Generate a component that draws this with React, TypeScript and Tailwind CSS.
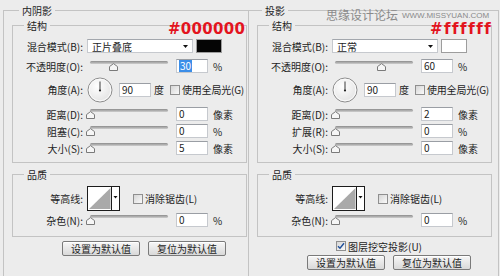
import React from 'react';

const LINE = 'border-[#c3c3c3]';

function Legend({ children, className = '' }: { children: React.ReactNode; className?: string }) {
    return <legend className={`px-[3px] h-[13px] leading-[13px] ${className}`}>{children}</legend>;
}

function Label({ children }: { children: React.ReactNode }) {
    return <div className="w-[70px] shrink-0 text-right whitespace-nowrap">{children}</div>;
}

function NumBox({ value, selected }: { value: string; selected?: boolean }) {
    return (
        <div className="w-[32px] h-[14px] shrink-0 bg-white border border-[#c6c9ce] border-t-[#9a9ea4] pl-[2px] flex items-center leading-none">
            {selected ? <span className="bg-[#3b8ee8] text-white px-[1px] py-[1px]">{value}</span> : <span>{value}</span>}
        </div>
    );
}

function Slider({ pct }: { pct: number }) {
    return (
        <div className="relative w-[84px] h-[14px] shrink-0">
            <div className="absolute left-[3px] top-[2px] w-[78px] h-[3px] rounded-full bg-linear-to-b from-[#8c8c8c] to-[#cfcfcf]" />
            <svg className="absolute top-[4px]" style={{ left: 3 + pct * 78 - 4.5 }} width="9" height="8" viewBox="0 0 9 8">
                <path d="M0.5 7.5 V3.6 L4.5 0.6 L8.5 3.6 V7.5 Z" fill="#f6f6f6" stroke="#7a7a7a" />
            </svg>
        </div>
    );
}

function Check({ checked }: { checked?: boolean }) {
    return (
        <div className="w-[10px] h-[10px] shrink-0 border border-[#8f8f8f] bg-linear-to-br from-[#d6d6d6] to-[#fafafa] flex items-center justify-center">
            {checked && (
                <svg width="8" height="8" viewBox="0 0 8 8">
                    <path d="M1 4.2 L3 6.3 L7 1.2" fill="none" stroke="#1f4f9a" strokeWidth="1.4" />
                </svg>
            )}
        </div>
    );
}

function Dial() {
    return (
        <svg width="26" height="26" viewBox="0 0 26 26" className="shrink-0">
            <defs>
                <radialGradient id="dialFill" cx="40%" cy="35%" r="75%">
                    <stop offset="0" stopColor="#ffffff" />
                    <stop offset="1" stopColor="#e0e0e0" />
                </radialGradient>
            </defs>
            <circle cx="13" cy="13" r="12" fill="url(#dialFill)" stroke="#8e8e8e" />
            <circle cx="13" cy="13" r="10.8" fill="none" stroke="#fbfbfb" />
            <line x1="13" y1="13.5" x2="13" y2="4.5" stroke="#3a3a3a" strokeWidth="1" />
            <circle cx="13" cy="13.5" r="1.1" fill="#222" />
        </svg>
    );
}

function Contour() {
    return (
        <svg width="33" height="25" viewBox="0 0 33 25" className="shrink-0">
            <rect x="0.5" y="0.5" width="32" height="24" fill="#fff" stroke="#1c1c1c" />
            <polygon points="2,23 23.5,2 23.5,23" fill="#a9a9a9" />
            <line x1="24.5" y1="0.5" x2="24.5" y2="24.5" stroke="#1c1c1c" />
            <polygon points="26.5,10 30.5,10 28.5,12.5" fill="#111" />
        </svg>
    );
}

function Button({ children }: { children: React.ReactNode }) {
    return (
        <div className="w-[78px] h-[15px] flex items-center justify-center rounded-[2px] border border-[#7a7a7a] bg-linear-to-b from-[#f7f7f7] to-[#d9d9d9] shadow-[inset_0_1px_0_#fff] leading-none">
            {children}
        </div>
    );
}

interface PanelProps {
    title: string;
    titleGap: string;
    outer: string;
    blend: string;
    swatch: string;
    opacity: number;
    selected?: boolean;
    distance: string;
    chokeLabel: string;
    choke: string;
    size: string;
    knockout?: boolean;
}

function Panel(p: PanelProps) {
    return (
        <fieldset className={`h-[300px] shrink-0 border ${LINE} ${p.outer}`}>
            <Legend className={p.titleGap}>{p.title}</Legend>

            {/* 结构 */}
            <fieldset className={`ml-[8px] mt-[2px] w-[235px] border ${LINE} pt-[7px] pb-[7px]`}>
                <Legend className="ml-[11px]">结构</Legend>
                <div className="flex items-center h-[14px]">
                    <Label>混合模式(B):</Label>
                    <div className="ml-[4px] w-[106px] h-[14px] bg-white border border-[#c6c9ce] border-t-[#a3a7ad] flex items-center pl-[4px] pr-[4px] justify-between">
                        <span>{p.blend}</span>
                        <svg width="5" height="3" viewBox="0 0 5 3"><polygon points="0,0 5,0 2.5,3" fill="#111" /></svg>
                    </div>
                    <div className={`ml-[3px] w-[26px] h-[14px] border border-[#9d9d9d] ${p.swatch}`} />
                </div>
                <div className="flex items-center h-[14px] mt-[6px]">
                    <Label>不透明度(O):</Label>
                    <div className="ml-[4px]"><Slider pct={p.opacity / 100} /></div>
                    <div className="ml-[5px]"><NumBox value={String(p.opacity)} selected={p.selected} /></div>
                    <span className="ml-[5px]">%</span>
                </div>
                <div className="flex items-center h-[25px] mt-[4px]">
                    <Label>角度(A):</Label>
                    <div className="ml-[4px]"><Dial /></div>
                    <div className="ml-[6px] w-[33px]"><NumBox value="90" /></div>
                    <span className="ml-[2px]">度</span>
                    <div className="ml-[6px]"><Check /></div>
                    <span className="ml-[2px] whitespace-nowrap tracking-[-0.2px]">使用全局光(G)</span>
                </div>
                <div className="flex items-center h-[14px] mt-[5px]">
                    <Label>距离(D):</Label>
                    <div className="ml-[4px]"><Slider pct={0} /></div>
                    <div className="ml-[5px]"><NumBox value={p.distance} /></div>
                    <span className="ml-[5px]">像素</span>
                </div>
                <div className="flex items-center h-[14px] mt-[3px]">
                    <Label>{p.chokeLabel}</Label>
                    <div className="ml-[4px]"><Slider pct={0} /></div>
                    <div className="ml-[5px]"><NumBox value={p.choke} /></div>
                    <span className="ml-[5px]">%</span>
                </div>
                <div className="flex items-center h-[14px] mt-[3px]">
                    <Label>大小(S):</Label>
                    <div className="ml-[4px]"><Slider pct={0} /></div>
                    <div className="ml-[5px]"><NumBox value={p.size} /></div>
                    <span className="ml-[5px]">像素</span>
                </div>
            </fieldset>

            {/* 品质 */}
            <fieldset className={`ml-[8px] mt-[5px] w-[235px] border ${LINE} pt-[5px] pb-[9px]`}>
                <Legend className="ml-[11px]">品质</Legend>
                <div className="flex items-center h-[25px]">
                    <Label>等高线:</Label>
                    <div className="ml-[4px]"><Contour /></div>
                    <div className="ml-[13px]"><Check /></div>
                    <span className="ml-[2px] whitespace-nowrap">消除锯齿(L)</span>
                </div>
                <div className="flex items-center h-[14px] mt-[2px]">
                    <Label>杂色(N):</Label>
                    <div className="ml-[4px]"><Slider pct={0} /></div>
                    <div className="ml-[5px]"><NumBox value="0" /></div>
                    <span className="ml-[5px]">%</span>
                </div>
            </fieldset>

            {p.knockout && (
                <div className="flex items-center h-[12px] mt-[3px] pl-[87px]">
                    <Check checked />
                    <span className="ml-[2px] whitespace-nowrap">图层挖空投影(U)</span>
                </div>
            )}

            <div className={`flex gap-[8px] pl-[58px] ${p.knockout ? 'mt-[3px]' : 'mt-[4px]'}`}>
                <Button>设置为默认值</Button>
                <Button>复位为默认值</Button>
            </div>
        </fieldset>
    );
}

export default function App() {
    return (
        <div className="relative w-[500px] h-[276px] overflow-hidden bg-[#ececec] text-[#1d1d1d] text-[10px] font-['Noto_Sans_CJK_SC','Liberation_Sans',sans-serif]">
            <div className="flex pl-[3px] pt-[4px]">
                <Panel
                    title="内阴影"
                    titleGap="ml-[15px]"
                    outer="w-[245px] border-r-0"
                    blend="正片叠底"
                    swatch="bg-[#050505]"
                    opacity={30}
                    selected
                    distance="0"
                    chokeLabel="阻塞(C):"
                    choke="0"
                    size="5"
                />
                <Panel
                    title="投影"
                    titleGap="ml-[13px]"
                    outer="w-[251px]"
                    blend="正常"
                    swatch="bg-white"
                    opacity={60}
                    distance="2"
                    chokeLabel="扩展(R):"
                    choke="0"
                    size="0"
                    knockout
                />
            </div>

            {/* red colour notes */}
            <div className="absolute left-[168px] top-[22px] text-[15px] leading-none font-bold text-[#e3141e] font-['DejaVu_Sans',sans-serif] tracking-[0.3px]">#000000</div>
            <div className="absolute left-[430px] top-[22px] text-[15px] leading-none font-bold text-[#e3141e] font-['DejaVu_Sans',sans-serif] tracking-[1.5px]">#ffffff</div>

            {/* watermark */}
            <div className="absolute left-[326px] top-[8px] flex items-end gap-[4px] text-[#8a8a8a]">
                <span className="text-[12px] leading-[14px]">思缘设计论坛</span>
                <span className="text-[8px] leading-[12px] font-['Liberation_Sans',sans-serif]">WWW.MISSYUAN.COM</span>
            </div>
        </div>
    );
}
